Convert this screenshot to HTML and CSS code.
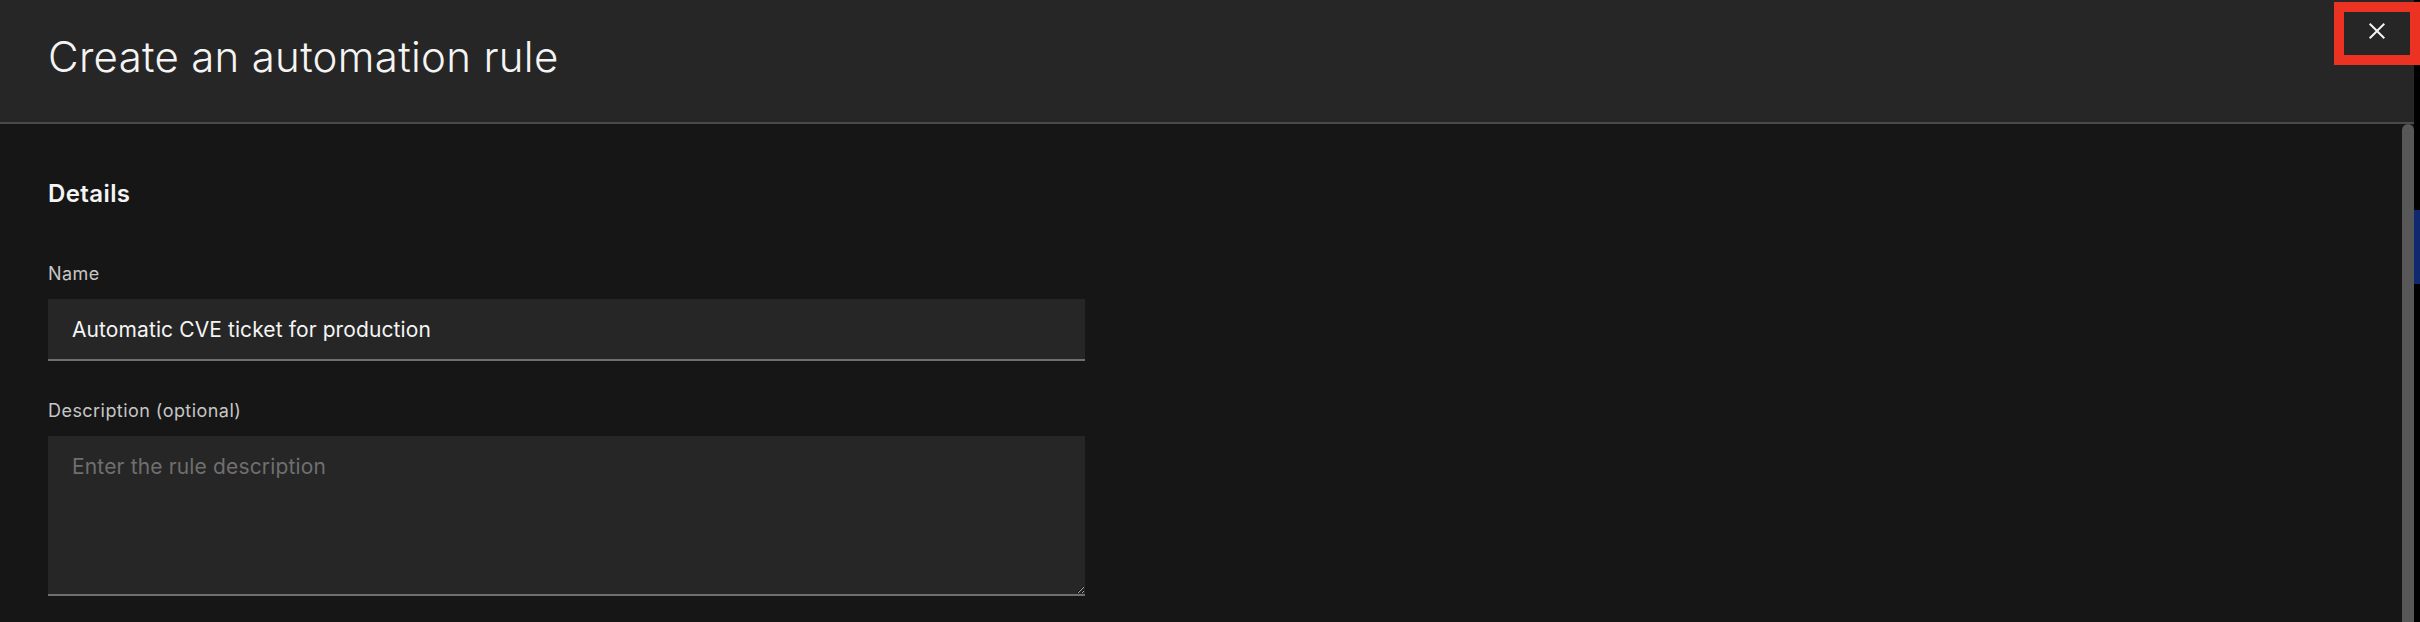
FILE: index.html
```html
<!DOCTYPE html>
<html lang="en">
<head>
<meta charset="utf-8">
<title>Create an automation rule</title>
<link rel="stylesheet" href="styles.css">
</head>
<body>
<div class="page">
  <div class="main">
    <header class="header">
      <h1 class="title">Create an automation rule</h1>
      <button class="close" aria-label="Close">
        <svg width="32" height="32" viewBox="0 0 32 32" fill="#f4f4f4"><path d="M24 9.4L22.6 8 16 14.6 9.4 8 8 9.4 14.6 16 8 22.6 9.4 24 16 17.4 22.6 24 24 22.6 17.4 16 24 9.4z"/></svg>
      </button>
    </header>
    <div class="body">
      <div class="content">
        <h2 class="section">Details</h2>
        <div class="field">
          <label class="label" for="name">Name</label>
          <input class="input" id="name" type="text" value="Automatic CVE ticket for production">
        </div>
        <div class="field">
          <label class="label" for="desc">Description (optional)</label>
          <textarea class="textarea" id="desc" placeholder="Enter the rule description"></textarea>
        </div>
      </div>
      <div class="scroll"><div class="thumb"></div></div>
    </div>
  </div>
  <div class="edge"><div class="edge-blue"></div></div>
  <div class="annotation"></div>
</div>
</body>
</html>
```
FILE: styles.css
```css
html, body {
  margin: 0;
  padding: 0;
  background: #161616;
}
body {
  width: 2420px;
  height: 622px;
  overflow: hidden;
  font-family: Inter, Roboto, "Liberation Sans", sans-serif;
  color: #f4f4f4;
}
.page {
  position: relative;
  display: flex;
  width: 2420px;
  height: 622px;
}
.main {
  flex: 1;
  display: flex;
  flex-direction: column;
  min-width: 0;
}
.header {
  position: relative;
  box-sizing: border-box;
  height: 124px;
  padding: 32px 48px 0 48px;
  background: #262626;
  border-bottom: 2px solid #4a4a4a;
}
.title {
  margin: 0;
  font-size: 42px;
  font-weight: 300;
  line-height: 50px;
  color: #f4f4f4;
  letter-spacing: 0.3px;
}
.close {
  position: absolute;
  top: 15px;
  right: 21px;
  width: 32px;
  height: 32px;
  padding: 0;
  border: 0;
  background: transparent;
  display: flex;
}
.body {
  flex: 1;
  display: flex;
  min-height: 0;
}
.content {
  flex: 1;
  padding: 52px 0 0 48px;
  background: #161616;
}
.section {
  margin: 0 0 48px;
  font-size: 24px;
  font-weight: 600;
  line-height: 36px;
  color: #f4f4f4;
  letter-spacing: 0.4px;
}
.field {
  display: flex;
  flex-direction: column;
  width: 1037px;
  margin-bottom: 36px;
}
.label {
  font-size: 18px;
  line-height: 27px;
  color: #c6c6c6;
  letter-spacing: 0.45px;
  margin-bottom: 12px;
}
.input {
  box-sizing: border-box;
  height: 62px;
  padding: 0 24px;
  border: 0;
  border-bottom: 2px solid #6f6f6f;
  background: #262626;
  color: #f4f4f4;
  font-family: inherit;
  font-size: 21px;
  letter-spacing: 0.1px;
  outline: none;
}
.textarea {
  box-sizing: border-box;
  height: 160px;
  padding: 16px 24px;
  border: 0;
  border-bottom: 2px solid #6f6f6f;
  background: #262626;
  color: #f4f4f4;
  font-family: inherit;
  font-size: 21px;
  line-height: 30px;
  letter-spacing: 0.15px;
  resize: vertical;
  outline: none;
  color-scheme: dark;
}
.textarea::placeholder {
  color: #6f6f6f;
}
.scroll {
  width: 12px;
  background: #161616;
}
.thumb {
  height: 100%;
  background: #575757;
  border-radius: 6px 6px 0 0;
}
.edge {
  width: 6px;
  background: #000;
  padding-top: 210px;
  box-sizing: border-box;
}
.edge-blue {
  height: 74px;
  background: #10296e;
}
.annotation {
  position: absolute;
  left: 2334px;
  top: 2px;
  width: 86px;
  height: 63px;
  box-sizing: border-box;
  border: 10px solid #ec3323;
  pointer-events: none;
}
```
